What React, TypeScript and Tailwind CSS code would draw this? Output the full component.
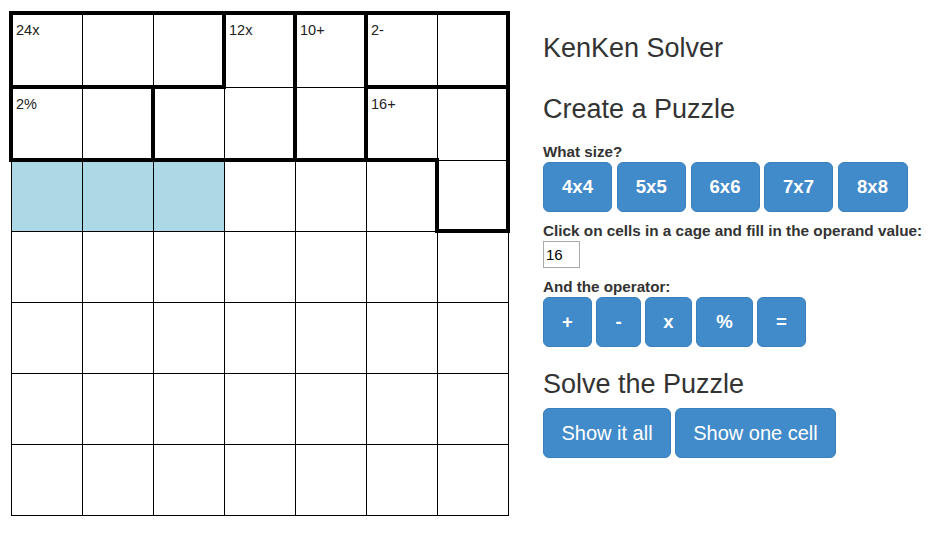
import React from "react";

const N = 7;
// cage id per cell; 0 = no cage
const cages: number[][] = [
  [1, 1, 1, 2, 3, 4, 4],
  [5, 5, 2, 2, 3, 6, 6],
  [0, 0, 0, 0, 0, 0, 6],
  [0, 0, 0, 0, 0, 0, 0],
  [0, 0, 0, 0, 0, 0, 0],
  [0, 0, 0, 0, 0, 0, 0],
  [0, 0, 0, 0, 0, 0, 0],
];
const labels: Record<string, string> = {
  "0,0": "24x",
  "0,3": "12x",
  "0,4": "10+",
  "0,5": "2-",
  "1,0": "2%",
  "1,5": "16+",
};
const rowH = ["h-[74px]", "h-[73px]", "h-[71px]", "h-[71px]", "h-[71px]", "h-[71px]", "h-[71px]"];

function edge(r: number, c: number, dr: number, dc: number) {
  const id = cages[r][c];
  if (id === 0) return false;
  const nr = r + dr;
  const nc = c + dc;
  if (nr < 0 || nr >= N || nc < 0 || nc >= N) return true;
  return cages[nr][nc] !== id;
}

function Btn({ children, w, bold = true }: { children: React.ReactNode; w: string; bold?: boolean }) {
  return (
    <button
      className={
        "h-[50px] rounded-[6px] bg-[#428bca] border border-[#3a80bd] text-white flex items-center justify-center leading-none whitespace-nowrap " +
        w +
        " " +
        (bold ? "font-bold text-[18.5px]" : "font-normal text-[20px]")
      }
    >
      {children}
    </button>
  );
}

export default function App() {
  return (
    <div
      className="w-[940px] h-[543px] bg-white text-[#333] flex"
      style={{ fontFamily: '"Liberation Sans", Arial, sans-serif' }}
    >
      <div className="pl-[9px] pt-[11px]">
        <table className="border-collapse">
          <tbody>
            {cages.map((row, r) => (
              <tr key={r}>
                {row.map((_, c) => {
                  const t = edge(r, c, -1, 0);
                  const b = edge(r, c, 1, 0);
                  const l = edge(r, c, 0, -1);
                  const rr = edge(r, c, 0, 1);
                  const hl = r === 2 && c <= 2;
                  const lab = labels[`${r},${c}`];
                  return (
                    <td
                      key={c}
                      className={
                        "w-[71px] p-0 align-top border-solid border-black " +
                        rowH[r] +
                        " " +
                        (t ? "border-t-[4px] " : "border-t ") +
                        (b ? "border-b-[4px] " : "border-b ") +
                        (l ? "border-l-[4px] " : "border-l ") +
                        (rr ? "border-r-[4px] " : "border-r ") +
                        (hl ? "bg-[#add8e6]" : "bg-white")
                      }
                    >
                      {lab ? (
                        <div className="pl-[3px] pt-[7px] text-[14.5px] leading-[16px] text-[#222]">{lab}</div>
                      ) : null}
                    </td>
                  );
                })}
              </tr>
            ))}
          </tbody>
        </table>
      </div>

      <div className="ml-[33px] flex flex-col items-start">
        <h1 className="mt-[33px] text-[27px] leading-[30px] font-normal">KenKen Solver</h1>
        <h2 className="mt-[31px] text-[27px] leading-[30px] font-normal">Create a Puzzle</h2>
        <div className="mt-[18px] text-[15.2px] leading-[20px] font-bold">What size?</div>
        <div className="flex gap-[4.5px]">
          <Btn w="w-[69px]">4x4</Btn>
          <Btn w="w-[69.5px]">5x5</Btn>
          <Btn w="w-[69px]">6x6</Btn>
          <Btn w="w-[69px]">7x7</Btn>
          <Btn w="w-[70px]">8x8</Btn>
        </div>
        <div className="mt-[9px] text-[15.3px] leading-[20px] font-bold whitespace-nowrap">
          Click on cells in a cage and fill in the operand value:
        </div>
        <input
          defaultValue="16"
          className="w-[37px] h-[27px] border border-[#a9a9a9] pl-[2px] text-[15px] text-black outline-none"
        />
        <div className="mt-[9px] text-[15.2px] leading-[20px] font-bold">And the operator:</div>
        <div className="flex gap-[4px]">
          <Btn w="w-[49px]">+</Btn>
          <Btn w="w-[45px]">-</Btn>
          <Btn w="w-[47px]">x</Btn>
          <Btn w="w-[57px]">%</Btn>
          <Btn w="w-[49px]">=</Btn>
        </div>
        <h2 className="mt-[22px] text-[27px] leading-[30px] font-normal">Solve the Puzzle</h2>
        <div className="mt-[9px] flex gap-[4px]">
          <Btn w="w-[128px]" bold={false}>
            Show it all
          </Btn>
          <Btn w="w-[161px]" bold={false}>
            Show one cell
          </Btn>
        </div>
      </div>
    </div>
  );
}
